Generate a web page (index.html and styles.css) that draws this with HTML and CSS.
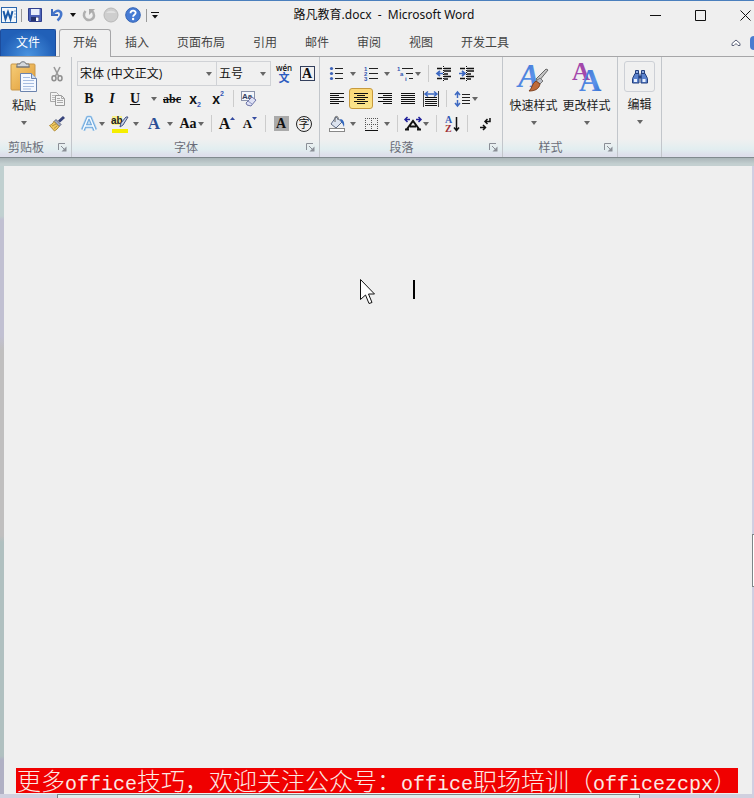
FILE: index.html
```html
<!DOCTYPE html>
<html lang="zh-CN">
<head>
<meta charset="utf-8">
<title>路凡教育.docx - Microsoft Word</title>
<link rel="stylesheet" href="styles.css">
</head>
<body>
<svg class="defs" width="0" height="0" aria-hidden="true">
  <defs>
    <symbol id="down" viewBox="0 0 6 4"><path d="M0 0h6L3 4z" fill="currentColor"/></symbol>
    <symbol id="launch" viewBox="0 0 9 9"><path d="M.5 7V.5H7" fill="none" stroke="#8a8e96"/><path d="M3 3l4 4" stroke="#8a8e96"/><path d="M8.500 3.500v5h-5z" fill="#8a8e96"/></symbol>
    <linearGradient id="blueA" x1="0" y1="0" x2="1" y2="1"><stop offset="0" stop-color="#2d5fc4"/><stop offset=".6" stop-color="#5b93ea"/><stop offset="1" stop-color="#2c63c8"/></linearGradient>
    <linearGradient id="gold" x1="0" y1="0" x2="1" y2="1"><stop offset="0" stop-color="#f6cd78"/><stop offset="1" stop-color="#e09b35"/></linearGradient>
  </defs>
</svg>

<header class="titlebar">
  <div class="quick">
    <svg class="ico16" viewBox="0 0 16 16"><rect x=".5" y=".5" width="15" height="15" fill="#f4f8fc" stroke="#2b66ac"/><path d="M13 4h2M13 7h2M13 10h2" stroke="#7fa6d2" fill="none"/><path d="M2.500 4l2 8L7 5l2.500 7 2-8" fill="none" stroke="#1c5ba8" stroke-width="2"/></svg>
    <span class="bar"></span>
    <button class="qbtn" aria-label="保存"><svg class="ico16" viewBox="0 0 16 16"><path d="M1.500 1.500h13v13h-12l-1-1z" fill="#4c62b8" stroke="#303f8c"/><path d="M4 2h8.500v6H4z" fill="#e8eefb"/><path d="M4 10h8v4H4z" fill="#26336d"/><path d="M9 10.500h2.500V14H9z" fill="#fff"/></svg></button>
    <button class="qbtn" aria-label="撤消"><svg class="ico16" viewBox="0 0 16 16"><path d="M3 2v6h6" fill="none" stroke="#3a68bd" stroke-width="2"/><path d="M3.500 7.500C6 4 9 3 11 4.500c2.500 2 1 6-2.500 9" fill="none" stroke="#4576cc" stroke-width="2.500"/></svg></button>
    <svg class="arrow dark"><use href="#down"/></svg>
    <button class="qbtn" aria-label="重复"><svg class="ico16" viewBox="0 0 16 16"><path d="M4.500 4C2 7 2.500 10.500 5.500 12.500c3.500 1.500 7.500-.5 7.500-4 0-2-.8-3.500-2-4.500" fill="none" stroke="#b0b0b0" stroke-width="2.500"/><path d="M8 2h6l-6 6z" fill="#aaa"/></svg></button>
    <button class="qbtn" aria-label="录制"><svg class="ico16" viewBox="0 0 16 16"><circle cx="8" cy="8" r="7" fill="#cecece" stroke="#b8b8b8"/><path d="M3 6a5.500 4 0 0 1 10 0z" fill="#e0e0e0"/></svg></button>
    <button class="qbtn" aria-label="帮助"><svg class="ico16" viewBox="0 0 16 16"><circle cx="8" cy="8" r="7.300" fill="#467bd4" stroke="#3565b5"/><path d="M5.500 6.200C5.500 2.800 10.700 3 10.700 5.800c0 1.900-2.600 1.900-2.600 4" fill="none" stroke="#fff" stroke-width="1.800"/><circle cx="8.100" cy="12" r="1.200" fill="#fff"/></svg></button>
    <span class="bar"></span>
    <button class="more" aria-label="自定义"><svg viewBox="0 0 8 7"><path d="M0 .5h8" stroke="#111"/><path d="M1 3h6L4 6.500z" fill="#111"/></svg></button>
  </div>
  <h1 class="title">路凡教育.docx  -  Microsoft Word</h1>
  <div class="window">
    <button aria-label="最小化"><svg viewBox="0 0 11 11"><path d="M0 5.500h11" stroke="#111"/></svg></button>
    <button aria-label="最大化"><svg viewBox="0 0 11 11"><path d="M.5.500h10v10H.5z" fill="none" stroke="#111"/></svg></button>
    <button aria-label="关闭"><svg viewBox="0 0 11 11"><path d="M.5.500l10 10M10.500.500l-10 10" stroke="#111"/></svg></button>
  </div>
</header>

<nav class="tabs">
  <a class="file" href="#file">文件</a>
  <a class="tab active" href="#home">开始</a>
  <a class="tab" href="#insert">插入</a>
  <a class="tab" href="#layout">页面布局</a>
  <a class="tab" href="#refs">引用</a>
  <a class="tab" href="#mail">邮件</a>
  <a class="tab" href="#review">审阅</a>
  <a class="tab" href="#view">视图</a>
  <a class="tab" href="#dev">开发工具</a>
  <div class="tabs-end">
    <button class="collapse" aria-label="折叠功能区"><svg viewBox="0 0 10 8"><path d="M5 1L1 4.500v2h2l2-2 2 2h2v-2z" fill="#fff" stroke="#5a6078"/></svg></button>
    <button class="edge-help" aria-label="帮助"></button>
  </div>
</nav>

<main class="ribbon">
  <section class="group clipboard">
    <div class="body">
      <button class="big">
        <svg class="ico32" viewBox="0 0 32 32"><rect x="3" y="3" width="24" height="26" rx="1" fill="url(#gold)" stroke="#c9974a"/><path d="M9 6V3h3c0-3 6-3 6 0h3v3z" fill="#d4d8dc" stroke="#70757c"/><path d="M8 6h14" stroke="#777"/><path d="M12.500 12.500h11l5 5v13h-16z" fill="#f4f8ff" stroke="#6b83ad"/><path d="M23.500 12.500v5h5" fill="#cddcf2" stroke="#6b83ad"/><path d="M15 16.500h7M15 19.500h11M15 22.500h11M15 25.500h11M15 28h8" stroke="#a6bce0"/></svg>
        <span>粘贴</span><svg class="arrow"><use href="#down"/></svg>
      </button>
      <div class="stack">
        <button class="tool" aria-label="剪切"><svg class="ico16" viewBox="0 0 16 16"><path d="M5 1l4.500 9M11 1L6.500 10" stroke="#999" stroke-width="1.600"/><ellipse cx="5" cy="12.300" rx="2" ry="2.500" fill="none" stroke="#8f8f8f" stroke-width="1.500"/><ellipse cx="11" cy="12.300" rx="2" ry="2.500" fill="none" stroke="#8f8f8f" stroke-width="1.500"/></svg></button>
        <button class="tool" aria-label="复制"><svg class="ico16" viewBox="0 0 16 16"><path d="M1.500 1.500h6l2 2v7h-8z" fill="#f3f3f3" stroke="#a8a8a8"/><path d="M3 4.500h4M3 6.500h3M3 8.500h3" stroke="#bbb"/><path d="M6.500 4.500h6l3 3v7h-9z" fill="#f3f3f3" stroke="#999"/><path d="M12.500 4.500v3h3M8 7.500h3M8 9.500h6M8 11.500h6" stroke="#aaa" fill="none"/></svg></button>
        <button class="tool" aria-label="格式刷"><svg class="ico16" viewBox="0 0 16 16"><path d="M15 1l-5 4.500" stroke="#39457c" stroke-width="3"/><path d="M7 3.500l5 5-2 2-5-5z" fill="#a0a9c2" stroke="#59617e"/><path d="M5 5.500l5 5c-1 2-3 3.500-4.500 4.500L.5 9.500C2 9 4 7.500 5 5.500z" fill="#f0ca62" stroke="#b08b36"/><path d="M3 10l4-2M5 12.500l3-2.500" stroke="#bb9137"/></svg></button>
      </div>
    </div>
    <footer><span>剪贴板</span><button aria-label="剪贴板选项"><svg><use href="#launch"/></svg></button></footer>
  </section>

  <section class="group font">
    <div class="rows">
      <div class="row combos">
        <label class="combo face"><select aria-label="字体"><option>宋体 (中文正文)</option></select><svg class="arrow"><use href="#down"/></svg></label>
        <label class="combo size"><select aria-label="字号"><option>五号</option></select><svg class="arrow"><use href="#down"/></svg></label>
        <button class="tool phonetic" aria-label="拼音指南"><span>wén</span><b>文</b></button>
        <button class="tool" aria-label="字符边框"><span class="boxed">A</span></button>
      </div>
      <div class="row">
        <button class="tool serif"><b>B</b></button>
        <button class="tool serif"><b><i>I</i></b></button>
        <button class="tool split far serif"><span class="glyph"><b><u>U</u></b></span><svg class="arrow"><use href="#down"/></svg></button>
        <button class="tool strike"><s>abc</s></button>
        <button class="tool script" aria-label="下标"><b>x</b><sub>2</sub></button>
        <button class="tool script" aria-label="上标"><b>x</b><sup>2</sup></button>
        <span class="sep"></span>
        <button class="tool" aria-label="清除格式"><svg class="ico16" viewBox="0 0 16 16"><rect x=".5" y=".5" width="13" height="9" fill="#f4f6fb" stroke="#8b94ac"/><text x="1" y="8" class="mini">Aa</text><path d="M11 6l4 3-5 6-4-1-1-2z" fill="#dfe2f6" stroke="#6d74a8"/><path d="M7 10l4 3" stroke="#8c92c0"/></svg></button>
      </div>
      <div class="row">
        <button class="tool split" aria-label="文本效果"><span class="glyph"><svg class="ico18" viewBox="0 0 18 18"><path d="M3 15L8 3h2l5 12M5 11h8" fill="none" stroke="#b5d6f2" stroke-width="5" stroke-linejoin="round"/><path d="M3 15L8 3h2l5 12M5 11h8" fill="none" stroke="#6fa8dc" stroke-width="3.500"/><path d="M3 15L8 3h2l5 12M5 11h8" fill="none" stroke="#f4faff" stroke-width="1.500"/></svg></span><svg class="arrow"><use href="#down"/></svg></button>
        <button class="tool split wide" aria-label="突出显示"><span class="glyph"><svg class="ico18" viewBox="0 0 18 18"><rect x="1" y="1" width="10" height="9" fill="#f7f18b"/><text x="0" y="9" class="ab">ab</text><path d="M17 2l-5 8-3 2 1-4 5-6z" fill="#c7d1ea" stroke="#42517f"/><rect x="1" y="14" width="16" height="4" fill="#f5ee00"/></svg></span><svg class="arrow"><use href="#down"/></svg></button>
        <button class="tool split wide serif color" aria-label="字体颜色"><span class="glyph"><b>A</b></span><svg class="arrow"><use href="#down"/></svg></button>
        <button class="tool split serif" aria-label="更改大小写"><span class="glyph"><b>Aa</b></span><svg class="arrow"><use href="#down"/></svg></button>
        <span class="sep"></span>
        <button class="tool serif grow" aria-label="增大字体"><b>A</b><svg viewBox="0 0 5 3"><path d="M0 3h5L2.500 0z" fill="#354ba0"/></svg></button>
        <button class="tool serif grow less" aria-label="缩小字体"><b>A</b><svg viewBox="0 0 5 3"><path d="M0 0h5L2.500 3z" fill="#354ba0"/></svg></button>
        <span class="sep"></span>
        <button class="tool" aria-label="字符底纹"><span class="boxed shade">A</span></button>
        <button class="tool" aria-label="带圈字符"><span class="ring">字</span></button>
      </div>
    </div>
    <footer><span>字体</span><button aria-label="字体选项"><svg><use href="#launch"/></svg></button></footer>
  </section>

  <section class="group paragraph">
    <div class="rows">
      <div class="row">
        <button class="tool split wide" aria-label="项目符号"><span class="glyph"><svg class="ico16" viewBox="0 0 16 16"><g fill="#3c62b8"><circle cx="2.500" cy="2.500" r="1.600"/><circle cx="2.500" cy="7.500" r="1.600"/><circle cx="2.500" cy="12.500" r="1.600"/></g><path d="M6 2.500h8M6 7.500h8M6 12.500h8" stroke="#222"/></svg></span><svg class="arrow"><use href="#down"/></svg></button>
        <button class="tool split wide" aria-label="编号"><span class="glyph"><svg class="ico16" viewBox="0 0 16 16"><g class="num"><text x="1" y="5">1</text><text x="1" y="10">2</text><text x="1" y="15">3</text></g><path d="M6 2.500h9M6 7.500h9M6 12.500h9" stroke="#222"/></svg></span><svg class="arrow"><use href="#down"/></svg></button>
        <button class="tool split" aria-label="多级列表"><span class="glyph"><svg class="ico16" viewBox="0 0 16 16"><g class="num"><text x="0" y="5">1</text><text x="3" y="10">a</text><text x="8" y="15">i</text></g><path d="M5 2.500h11M9 7.500h7M12 12.500h4" stroke="#222"/></svg></span><svg class="arrow"><use href="#down"/></svg></button>
        <span class="sep"></span>
        <button class="tool" aria-label="减少缩进"><svg class="ico16" viewBox="0 0 16 16"><path d="M1 2.500h5M8 2.500h7M8 5h7M8 8h4M8 10.500h7M1 12.500h5M8 13h4" stroke="#111" stroke-width="1.500"/><path d="M7.500 0v16" stroke="#111" stroke-dasharray="1 1"/><path d="M7 7.500H2M4 5L1 7.500 4 10" fill="none" stroke="#3d69c2" stroke-width="1.700"/></svg></button>
        <button class="tool" aria-label="增加缩进"><svg class="ico16" viewBox="0 0 16 16"><path d="M1 2.500h5M8 2.500h7M8 5h7M8 8h4M8 10.500h7M1 12.500h5M8 13h4" stroke="#111" stroke-width="1.500"/><path d="M7.500 0v16" stroke="#111" stroke-dasharray="1 1"/><path d="M0 7.500h5M3 5l3 2.500L3 10" fill="none" stroke="#3d69c2" stroke-width="1.700"/></svg></button>
      </div>
      <div class="row">
        <button class="tool" aria-label="左对齐"><svg class="ico16" viewBox="0 0 16 16"><path d="M1 2.500h14M1 4.500h9M1 6.500h14M1 8.500h9M1 10.500h14M1 12.500h9" stroke="#111"/></svg></button>
        <button class="tool on" aria-label="居中"><svg class="ico16" viewBox="0 0 16 16"><path d="M1 2.500h14M4 4.500h8M1 6.500h14M4 8.500h8M1 10.500h14M4 12.500h8" stroke="#111"/></svg></button>
        <button class="tool" aria-label="右对齐"><svg class="ico16" viewBox="0 0 16 16"><path d="M1 2.500h14M6 4.500h9M1 6.500h14M6 8.500h9M1 10.500h14M6 12.500h9" stroke="#111"/></svg></button>
        <button class="tool" aria-label="两端对齐"><svg class="ico16" viewBox="0 0 16 16"><path d="M1 2.500h14M1 4.500h14M1 6.500h14M1 8.500h14M1 10.500h14M1 12.500h14" stroke="#111"/></svg></button>
        <button class="tool" aria-label="分散对齐"><svg class="ico16" viewBox="0 0 16 16"><path d="M.5 0v16M15.500 0v16" stroke="#444"/><path d="M2 3h12M5 .5L2 3l3 2.500M11 .5L14 3l-3 2.500" fill="none" stroke="#3d69c2" stroke-width="1.500"/><path d="M2 6.500h12M2 8.500h12M2 10.500h12M2 12.500h12M2 14.500h12" stroke="#111"/></svg></button>
        <span class="sep"></span>
        <button class="tool split" aria-label="行距"><span class="glyph"><svg class="ico16" viewBox="0 0 16 16"><path d="M3.500 1v6M1 4l2.500-3L6 4M3.500 9v6M1 12l2.500 3L6 12" fill="none" stroke="#3d69c2" stroke-width="1.500"/><path d="M8 3.500h8M8 6.500h8M8 9.500h8M8 12.500h8" stroke="#222"/></svg></span><svg class="arrow"><use href="#down"/></svg></button>
      </div>
      <div class="row">
        <button class="tool split wide" aria-label="底纹"><span class="glyph"><svg class="ico16" viewBox="0 0 16 16"><path d="M7 1l6 5-6 6-5-4z" fill="#dce3ef" stroke="#5e6b85"/><path d="M6 6V1.500C6 0 9 0 9 1.500V4" fill="none" stroke="#666"/><path d="M11 3c3 0 5 3 4 8-1-2-1-3-3-5z" fill="#3468bd"/><rect x=".5" y="12.500" width="15" height="3" fill="#fff" stroke="#888"/></svg></span><svg class="arrow"><use href="#down"/></svg></button>
        <button class="tool split wide" aria-label="边框"><span class="glyph"><svg class="ico16" viewBox="0 0 16 16"><path d="M2.500 2v11M8.500 2v11M14.500 2v11M2 2.500h13M2 8.500h13" stroke="#555" stroke-dasharray="1 1" fill="none"/><path d="M2 14.500h13" stroke="#111"/></svg></span><svg class="arrow"><use href="#down"/></svg></button>
        <span class="sep"></span>
        <button class="tool split" aria-label="中文版式"><span class="glyph"><svg class="ico18" viewBox="0 0 18 18"><path d="M1 4.500h5M3.500 2L1 4.500 3.500 7M17 4.500h-5M14.500 2L17 4.500 14.500 7" fill="none" stroke="#22229a" stroke-width="1.500"/><path d="M1 14.500h4M13 14.500h4M3 14l6-8 6 8M6 11.500h6" fill="none" stroke="#111" stroke-width="2"/></svg></span><svg class="arrow"><use href="#down"/></svg></button>
        <span class="sep"></span>
        <button class="tool" aria-label="排序"><svg class="ico16" viewBox="0 0 16 16"><text x="1" y="7" class="sortA">A</text><text x="1" y="16" class="sortZ">Z</text><path d="M12.500 1v13M10 11.500l2.500 3 2.500-3" fill="none" stroke="#111" stroke-width="1.500"/></svg></button>
        <span class="sep"></span>
        <button class="tool" aria-label="显示编辑标记"><svg class="ico16" viewBox="0 0 16 16"><path d="M15 2v3.500h-4M12.500 3L10 5.500 12.500 8" fill="none" stroke="#111" stroke-width="1.500"/><path d="M5 11.500h5M8 9l2.500 2.500L8 14" fill="none" stroke="#111" stroke-width="1.500"/></svg></button>
      </div>
    </div>
    <footer><span>段落</span><button aria-label="段落选项"><svg><use href="#launch"/></svg></button></footer>
  </section>

  <section class="group styles">
    <div class="body">
      <button class="big">
        <svg class="ico32" viewBox="0 0 32 32"><text x="0" y="26" class="styleA">A</text><path d="M30 9l-9 11-3-2L28 8z" fill="#c4c4c4" stroke="#666"/><path d="M22 17l3 3-3 3-4-3z" fill="#b9bcc4" stroke="#777"/><path d="M18 20l4 3c-1 5-5 7-11 7 3-2 3-8 7-10z" fill="#bf6a3a" stroke="#7f4120"/></svg>
        <span>快速样式</span><svg class="arrow"><use href="#down"/></svg>
      </button>
      <button class="big">
        <svg class="ico32" viewBox="0 0 32 32"><text x="1" y="19" class="styleP">A</text><text x="8" y="30" class="styleB">A</text></svg>
        <span>更改样式</span><svg class="arrow"><use href="#down"/></svg>
      </button>
    </div>
    <footer><span>样式</span><button aria-label="样式选项"><svg><use href="#launch"/></svg></button></footer>
  </section>

  <section class="group editing">
    <div class="body">
      <button class="big">
        <span class="frame"><svg class="ico16" viewBox="0 0 16 16"><path d="M3.500 1.500h3v3h-3zM9.500 1.500h3v3h-3z" fill="#8fabe0" stroke="#24407e"/><path d="M3 4.500h4V14H.5V9.500zM9 4.500h4l2.500 5V14H9z" fill="#5b82cd" stroke="#24407e"/><path d="M6.500 6.500h3v3h-3z" fill="#24407e"/><path d="M2 10h3v3H2zM10.500 10h3v3h-3z" fill="#e8f0ff"/></svg></span>
        <span>编辑</span><svg class="arrow"><use href="#down"/></svg>
      </button>
    </div>
  </section>
</main>

<div class="workspace">
  <div class="gutter"></div>
  <article class="page">
    <div class="text"><span class="caret"></span></div>
    <p class="banner">更多<span>office</span>技巧，欢迎关注公众号：<span>office</span>职场培训（<span>officezcpx</span>）</p>
    <svg class="pointer" viewBox="0 0 16 26"><path d="M.5.500v20l5-4.500 3.500 8.500 3-1-3.500-8.500h6z" fill="#fff" stroke="#111"/></svg>
  </article>
  <div class="rail"><span class="thumb"></span></div>
</div>
<div class="hscroll"><span></span></div>
</body>
</html>
```
FILE: styles.css
```css
* { box-sizing: border-box; }

body {
  margin: 0;
  height: 100vh;
  display: flex;
  flex-direction: column;
  overflow: hidden;
  background: #efefef;
  color: #222;
  font: 12px/16px "Open Sans", "Noto Sans CJK SC", sans-serif;
}

button {
  padding: 0;
  border: 0;
  background: none;
  color: inherit;
  font: inherit;
}

svg { display: block; flex: none; overflow: visible; }
.defs { position: absolute; }
.ico16 { width: 16px; height: 16px; }
.ico18 { width: 18px; height: 18px; }
.ico32 { width: 32px; height: 32px; }
.arrow { width: 6px; height: 4px; color: #666; }
.arrow.dark { color: #111; }

/* Title bar */
.titlebar {
  display: grid;
  grid-template-columns: 1fr auto 1fr;
  align-items: center;
  height: 29px;
  border-top: 1px solid #4a7fbd;
  flex: none;
}
.quick { display: flex; align-items: center; gap: 4px; padding-left: 1px; }
.quick .bar { width: 1px; height: 13px; background: #999; }
.qbtn { width: 18px; display: flex; justify-content: center; }
.more svg { width: 8px; height: 7px; }
.title {
  margin: 0;
  padding-left: 14px;
  font: 12px/16px "Noto Sans", "Noto Sans CJK SC", sans-serif;
  color: #111;
  white-space: pre;
}
.window { display: flex; justify-content: flex-end; gap: 27px; }
.window button { width: 18px; height: 20px; display: grid; place-items: center; }
.window svg { width: 11px; height: 11px; }

/* Ribbon tabs */
.tabs {
  display: flex;
  height: 28px;
  border-bottom: 1px solid #a6a6a8;
  flex: none;
}
.tabs a { color: #444; text-decoration: none; line-height: 27px; text-align: center; }
.tabs .file {
  width: 56px;
  margin-right: 3px;
  border: 1px solid #1d4c9c;
  border-bottom: 0;
  border-radius: 2px 2px 0 0;
  background: radial-gradient(ellipse at 50% 100%, #4a94e0, #2160b8 70%);
  color: #fff;
  line-height: 26px;
}
.tab { padding: 0 14px; }
.tabs .active {
  height: 28px;
  padding: 0 13px;
  border: 1px solid #a6a6a8;
  border-bottom: 0;
  border-radius: 3px 3px 0 0;
  background: #f0f0f0;
  line-height: 26px;
}
.tabs-end { margin-left: auto; display: flex; align-items: center; gap: 9px; }
.collapse svg { width: 10px; height: 8px; }
.edge-help { width: 4px; height: 14px; border-radius: 7px 0 0 7px; background: #4a7bd0; }

/* Ribbon */
.ribbon {
  display: flex;
  flex: none;
  height: 101px;
  background: linear-gradient(#f0f0f0 82%, #e2eef0 92%, #dedfeb 98%);
  border-bottom: 1px solid #808a8e;
}
.group {
  display: flex;
  flex-direction: column;
  padding-top: 4px;
  border-right: 1px solid #c2c6cb;
}
.clipboard { width: 72px; }
.font { width: 248px; }
.paragraph { width: 183px; }
.styles { width: 115px; }
.editing { width: 44px; }
.body { display: flex; height: 75px; justify-content: center; }
.clipboard .body { justify-content: space-between; padding: 0 4px 0 6px; }
.stack { display: flex; flex-direction: column; }
.stack .tool { height: 25px; }
.rows { height: 75px; padding-left: 5px; }
.row { display: flex; align-items: center; height: 25px; gap: 3px; padding-left: 2px; }
.row.combos { gap: 0; padding-left: 0; }

.group footer { display: flex; align-items: center; height: 21px; padding: 2px 4px 0 0; color: #6a6d78; }
.group footer span { flex: 1; text-align: center; padding-right: 6px; }
.group footer svg { width: 9px; height: 9px; }

.big { display: flex; flex-direction: column; align-items: center; min-width: 36px; white-space: nowrap; }
.styles .big { min-width: 53px; }
.big > span { margin-top: 4px; line-height: 18px; }
.big > .arrow { margin-top: 6px; }
.big > .frame {
  display: grid;
  place-items: center;
  width: 31px;
  height: 31px;
  margin-top: 0;
  border: 1px solid #cdd0d6;
  border-radius: 3px;
}

.combo { display: grid; align-items: center; height: 25px; border: 1px solid #d0d2d6; }
.combo.face { width: 140px; }
.combo.size { width: 54px; margin-right: 3px; border-left: 0; }
.combo select {
  grid-area: 1 / 1;
  width: 100%;
  height: 23px;
  padding: 0 2px;
  border: 0;
  appearance: none;
  background: none;
  color: #111;
  font: inherit;
}
.combo .arrow { grid-area: 1 / 1; justify-self: end; margin-right: 4px; pointer-events: none; }

.tool { display: flex; align-items: center; justify-content: center; width: 20px; height: 21px; flex: none; color: #111; }
.combos .tool + .tool { margin-left: 3px; }
.split { width: auto; margin-right: 2px; }
.split .glyph { display: flex; justify-content: center; width: 20px; }
.split.wide { gap: 3px; }
.split.far { gap: 6px; }
.on {
  width: 24px;
  margin: 0 -1px;
  border: 1px solid #c79a3c;
  border-radius: 3px;
  background: linear-gradient(#fbd877, #fbe58c);
}
.sep { width: 1px; height: 17px; margin: 0 2px; background: #ccc; }

.serif { font: 14px/16px "Liberation Serif", serif; }
.color { color: #2c4f96; font-size: 17px; }
.strike { font: bold 12px/16px "Liberation Serif", serif; }
.script { font: 14px/16px "Liberation Sans", sans-serif; }
.script sub, .script sup { font-size: 7px; line-height: 8px; color: #3355b5; font-weight: 700; }
.script sub { align-self: flex-end; }
.script sup { align-self: flex-start; padding-top: 2px; }
.grow { font-size: 16px; }
.grow.less { font-size: 13px; }
.grow svg { width: 5px; height: 3px; align-self: flex-start; margin-top: 4px; }
.phonetic { flex-direction: column; font-size: 8px; line-height: 7px; }
.phonetic span { font-weight: 600; }
.phonetic b { color: #2c5cc0; font-size: 11px; line-height: 13px; }
.boxed {
  width: 15px;
  height: 15px;
  border: 1px solid #333f5c;
  font: bold 14px/14px "Liberation Serif", serif;
  text-align: center;
}
.boxed.shade { border-color: #aaa; background: #aaa; }
.ring { width: 16px; height: 16px; border: 1px solid #222; border-radius: 50%; font-size: 11px; line-height: 14px; text-align: center; }

.mini { font: bold 8px "Liberation Sans", sans-serif; fill: #333e60; }
.ab { font: bold 10px "Liberation Sans", sans-serif; fill: #222; }
.num { font: bold 6px "Liberation Sans", sans-serif; fill: #3155b0; }
.sortA, .sortZ { font: bold 10px "Liberation Serif", serif; }
.sortA { fill: #3159b4; }
.sortZ { fill: #a03038; }
.styleA, .styleP, .styleB { font-family: "Liberation Serif", serif; font-weight: 700; }
.styleA { font-size: 33px; font-style: italic; fill: url(#blueA); }
.styleP { font-size: 25px; fill: #a348ab; }
.styleB { font-size: 31px; fill: url(#blueA); }

/* Document */
.workspace {
  flex: 1;
  min-height: 0;
  display: flex;
  padding-top: 8px;
  background: linear-gradient(#aab5b8, #c3cfd0 6px);
}
.gutter {
  width: 4px;
  background: linear-gradient(#c0d0d0 0 50px, #c1c0d2 54px 170px, #c0bfbf 184px 370px, #b0c0c0 376px 590px, #b0b0c4 594px);
}
.page { position: relative; flex: 1; display: flex; flex-direction: column; background: #efefef; }
.text { flex: 1; padding: 114px 0 0 409px; }
.caret { display: block; width: 2px; height: 19px; background: #000; }
.pointer { position: absolute; left: 356px; top: 113px; width: 16px; height: 26px; }
.banner {
  width: fit-content;
  margin: 0 0 1px 12px;
  padding: 0 1px;
  background: #f00000;
  color: #fbe9e4;
  font: 300 24px/24px "Noto Sans CJK SC", sans-serif;
  white-space: nowrap;
}
.banner span { font: 20px/16px "Liberation Mono", monospace; }
.rail { width: 2px; display: flex; flex-direction: column; justify-content: center; background: #d0cfe2; }
.thumb { height: 53px; margin-top: 160px; border: 1px solid #7c8688; border-right: 0; background: #fff; }
.hscroll { flex: none; height: 4px; padding: 0 114px 0 57px; background: #d0d0df; }
.hscroll span { display: block; height: 4px; border: 1px solid #7c8688; border-bottom: 0; background: #e2efef; }
```
